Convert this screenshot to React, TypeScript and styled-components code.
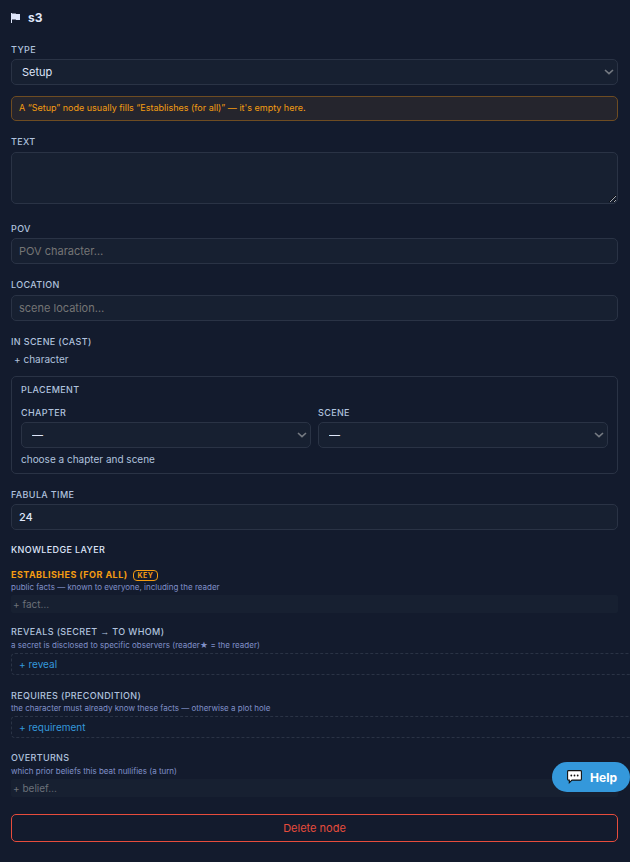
import React, { useState } from "react";
import styled, { createGlobalStyle, css } from "styled-components";

const c = {
  bg: "#131b2d",
  field: "#172031",
  border: "#2a3345",
  text: "#dfe6fa",
  label: "#b0c2de",
  hint: "#8090c8",
  orange: "#f39c12",
  blue: "#3498db",
  red: "#e74c3c",
};

const GlobalStyle = createGlobalStyle`
  *, *::before, *::after { box-sizing: border-box; }
  body {
    margin: 0;
    background: ${c.bg};
    color: ${c.text};
    font-family: Inter, "Liberation Sans", sans-serif;
    font-size: 11px;
    overflow-x: hidden;
  }
  button, input, select, textarea { font: inherit; color: inherit; margin: 0; }
`;

const Panel = styled.form`
  display: flex;
  flex-direction: column;
  padding: 9px 12px 20px 11px;
  overflow-x: hidden;
`;

const Title = styled.h1`
  display: flex;
  align-items: center;
  gap: 8px;
  margin: 0;
  font-size: 12px;
  line-height: 17px;
  font-weight: 700;
`;

const Field = styled.div<{ $gap?: number }>`
  display: flex;
  flex-direction: column;
  min-width: 0;
  margin-top: ${(p) => p.$gap ?? 15}px;
`;

const labelText = css`
  font-size: 9px;
  line-height: 12px;
  font-weight: 500;
  letter-spacing: 0.04em;
  text-transform: uppercase;
  color: ${c.label};
`;

const Label = styled.label<{ $tight?: boolean }>`
  ${labelText}
  margin-bottom: ${(p) => (p.$tight ? 3 : 4)}px;
`;

const Heading = styled.h2<{ $gap?: number }>`
  ${labelText}
  margin: ${(p) => p.$gap ?? 0}px 0 0;
`;

const SectionHeading = styled(Heading)`
  color: ${c.text};
`;

const box = css`
  width: 100%;
  background: ${c.field};
  border: 1px solid ${c.border};
  border-radius: 5px;
  padding: 0 7px;
  outline-color: ${c.blue};
`;

const Input = styled.input`
  ${box}
  height: 26px;
  font-weight: 500;
  &::placeholder { color: #757575; font-weight: 400; opacity: 1; }
`;

const Area = styled.textarea`
  ${box}
  display: block;
  height: 52px;
  padding: 5px 7px;
  resize: vertical;
`;

const SelectBox = styled.div`
  position: relative;
  svg {
    position: absolute;
    right: 4px;
    top: 10px;
    pointer-events: none;
  }
`;

const SelectInput = styled.select`
  ${box}
  display: block;
  height: 26px;
  padding: 0 20px 0 10px;
  appearance: none;
`;

const Notice = styled.p`
  margin: 11px 0 0;
  padding: 5px 7px 6px;
  border: 1px solid #6e4c22;
  border-radius: 5px;
  background: #25252d;
  color: ${c.orange};
  font-size: 9px;
  line-height: 12px;
`;

const PlainButton = styled.button`
  align-self: flex-start;
  padding: 0 3px;
  border: 0;
  background: none;
  color: ${c.label};
  font-size: 10px;
  line-height: 14px;
  cursor: pointer;
`;

const Placement = styled.section`
  display: flex;
  flex-direction: column;
  margin-top: 10px;
  padding: 7px 9px 6px;
  border: 1px solid ${c.border};
  border-radius: 5px;
`;

const Columns = styled.div`
  display: grid;
  grid-template-columns: 1fr 1fr;
  gap: 7px;
`;

const Note = styled.p`
  margin: 4px 0 1px;
  color: ${c.label};
  font-size: 10px;
  line-height: 14px;
`;

const LayerLabel = styled.label<{ $key?: boolean }>`
  ${labelText}
  ${(p) =>
    p.$key &&
    css`
      display: flex;
      align-items: center;
      gap: 5px;
      color: ${c.orange};
      font-weight: 700;
      letter-spacing: 0.05em;
    `}
`;

const Arrow = styled.span`
  font-family: "Liberation Sans", sans-serif;
  font-weight: 700;
`;

const KeyBadge = styled.span`
  padding: 0 4px;
  border: 1px solid ${c.orange};
  border-radius: 4px;
  font-size: 7px;
  line-height: 9px;
  font-weight: 700;
`;

const Hint = styled.p<{ $gap?: number }>`
  margin: ${(p) => p.$gap ?? 0}px 0 2px;
  color: ${c.hint};
  font-size: 8px;
  line-height: 12px;
`;

const FactInput = styled.input`
  width: 100%;
  height: 18px;
  padding: 0 2px;
  border: 0;
  border-radius: 2px;
  background: ${c.field};
  font-size: 10px;
  outline-color: ${c.blue};
  &::placeholder { color: #6b7079; opacity: 1; }
`;

const AddRow = styled.button`
  width: calc(100% + 28px);
  height: 22px;
  padding: 0 7px;
  border: 1px dashed ${c.border};
  border-radius: 4px;
  background: none;
  color: ${c.blue};
  font-size: 10px;
  text-align: left;
  cursor: pointer;
`;

const DeleteButton = styled.button`
  height: 28px;
  margin-top: 17px;
  border: 1px solid ${c.red};
  border-radius: 5px;
  background: none;
  color: ${c.red};
  cursor: pointer;
`;

const HelpButton = styled.button`
  position: fixed;
  right: 0;
  bottom: 70px;
  display: flex;
  align-items: center;
  gap: 8px;
  height: 30px;
  padding: 0 13px 0 15px;
  border: 0;
  border-radius: 15px;
  background: ${c.blue};
  color: #fff;
  font-size: 12px;
  font-weight: 700;
  cursor: pointer;
`;

const Flag = () => (
  <svg width="9" height="10" viewBox="0 0 9 10" aria-hidden="true">
    <path d="M0 0H1V.4H4.600L5.200 1H9V7H5.200L4.600 6.600H1V10H0Z" fill={c.text} />
  </svg>
);

const Chevron = () => (
  <svg width="10" height="6" viewBox="0 0 10 6" fill="none" aria-hidden="true">
    <path d="M1 1L5 4.600L9 1" stroke="#757a82" strokeWidth="1.600" />
  </svg>
);

const Bubble = () => (
  <svg width="15" height="14" viewBox="0 0 15 14" aria-hidden="true">
    <path d="M1.500.6H13.500Q14.400.6 14.400 1.500V9.200Q14.400 10.100 13.500 10.100H5L2.300 12.700V10.100H1.500Q.6 10.100.6 9.200V1.500Q.6.6 1.500.6Z" fill="#fff" stroke="#111" strokeWidth="1.100" />
    <g fill="#111">
      <circle cx="4.300" cy="5.500" r=".9" />
      <circle cx="7.500" cy="5.500" r=".9" />
      <circle cx="10.700" cy="5.500" r=".9" />
    </g>
  </svg>
);

function Select({ id, options }: { id: string; options: string[] }) {
  return (
    <SelectBox>
      <SelectInput id={id}>
        {options.map((o) => (
          <option key={o}>{o}</option>
        ))}
      </SelectInput>
      <Chevron />
    </SelectBox>
  );
}

export default function App() {
  const [time, setTime] = useState("24");
  return (
    <>
      <GlobalStyle />
      <Panel onSubmit={(e) => e.preventDefault()}>
        <Title>
          <Flag />
          s3
        </Title>

        <Field $gap={18}>
          <Label htmlFor="type" $tight>Type</Label>
          <Select id="type" options={["Setup"]} />
        </Field>
        <Notice>A “Setup” node usually fills “Establishes (for all)” — it's empty here.</Notice>

        <Field>
          <Label htmlFor="text">Text</Label>
          <Area id="text" />
        </Field>
        <Field $gap={19}>
          <Label htmlFor="pov" $tight>POV</Label>
          <Input id="pov" placeholder="POV character…" />
        </Field>
        <Field>
          <Label htmlFor="location">Location</Label>
          <Input id="location" placeholder="scene location…" />
        </Field>

        <Field>
          <Label as="span" id="cast">In scene (cast)</Label>
          <PlainButton type="button" aria-describedby="cast">+ character</PlainButton>
        </Field>

        <Placement>
          <Heading>Placement</Heading>
          <Columns>
            <Field $gap={11}>
              <Label htmlFor="chapter" $tight>Chapter</Label>
              <Select id="chapter" options={["—"]} />
            </Field>
            <Field $gap={11}>
              <Label htmlFor="scene" $tight>Scene</Label>
              <Select id="scene" options={["—"]} />
            </Field>
          </Columns>
          <Note>choose a chapter and scene</Note>
        </Placement>

        <Field>
          <Label htmlFor="time" $tight>Fabula time</Label>
          <Input id="time" value={time} onChange={(e) => setTime(e.target.value)} />
        </Field>

        <SectionHeading $gap={14}>Knowledge layer</SectionHeading>

        <Field $gap={13}>
          <LayerLabel htmlFor="fact" $key>
            Establishes (for all) <KeyBadge>Key</KeyBadge>
          </LayerLabel>
          <Hint>public facts — known to everyone, including the reader</Hint>
          <FactInput id="fact" placeholder="+ fact…" />
        </Field>
        <Field $gap={13}>
          <LayerLabel htmlFor="reveal">
            Reveals (secret <Arrow>→</Arrow> to whom)
          </LayerLabel>
          <Hint $gap={1}>a secret is disclosed to specific observers (reader★ = the reader)</Hint>
          <AddRow id="reveal" type="button">+ reveal</AddRow>
        </Field>
        <Field>
          <LayerLabel htmlFor="requirement">Requires (precondition)</LayerLabel>
          <Hint>the character must already know these facts — otherwise a plot hole</Hint>
          <AddRow id="requirement" type="button">+ requirement</AddRow>
        </Field>
        <Field $gap={14}>
          <LayerLabel htmlFor="belief">Overturns</LayerLabel>
          <Hint $gap={1}>which prior beliefs this beat nullifies (a turn)</Hint>
          <FactInput id="belief" placeholder="+ belief…" />
        </Field>

        <DeleteButton type="button">Delete node</DeleteButton>
      </Panel>
      <HelpButton type="button">
        <Bubble />
        Help
      </HelpButton>
    </>
  );
}
